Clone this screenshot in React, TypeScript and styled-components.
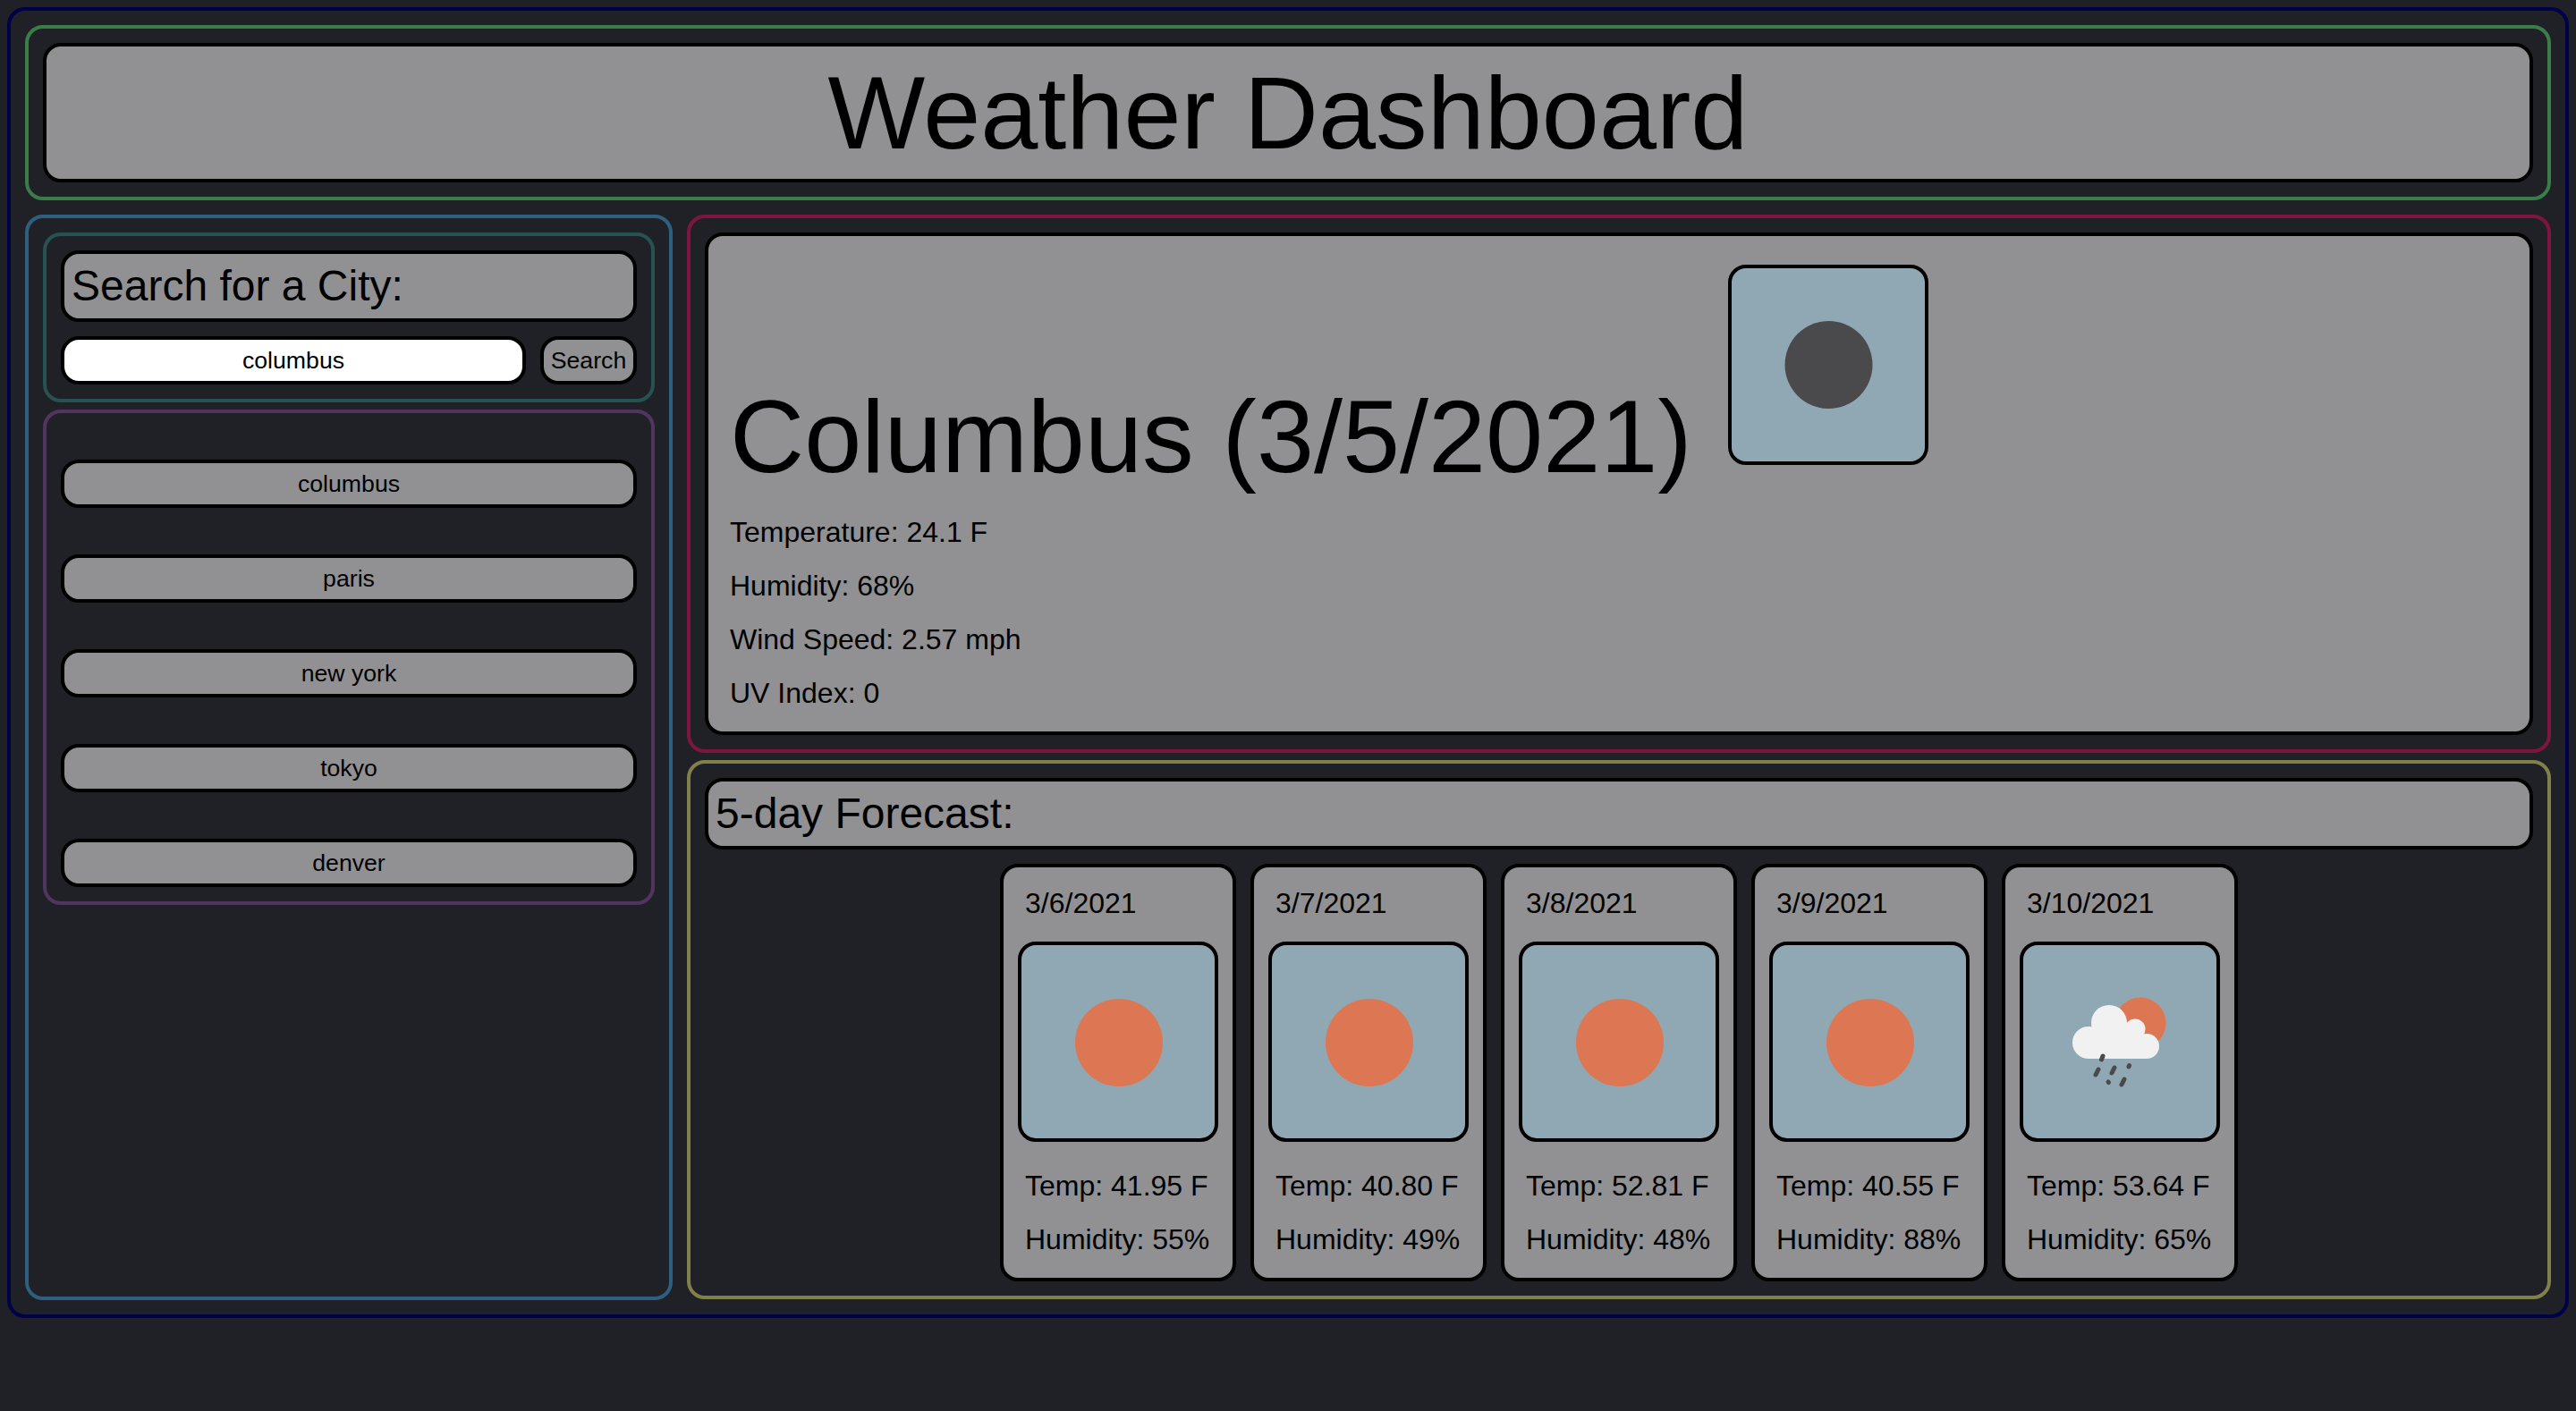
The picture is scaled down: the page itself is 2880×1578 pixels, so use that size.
import React from "react";
import styled, { createGlobalStyle } from "styled-components";

const GlobalStyle = createGlobalStyle`
  html, body { margin: 0; padding: 0; background: #202126; }
  body { margin: 8px; font-family: "Liberation Sans", Arial, sans-serif; color: #000; }
  * { box-sizing: border-box; }
`;

const GRAY = "#919193";
const SKY = "#90a8b4";
const ORANGE = "#dd7753";

const Frame = styled.div<{ $color: string }>`
  border: 4px solid ${(p) => p.$color};
  border-radius: 20px;
  padding: 16px;
`;

const Page = styled(Frame)`
  height: 1466px;
  display: flex;
  flex-direction: column;
  gap: 16px;
`;

const Plate = styled.div`
  background: ${GRAY};
  border: 4px solid #000;
  border-radius: 20px;
`;

const TitleBar = styled(Plate)`
  height: 156px;
  display: flex;
  align-items: center;
  justify-content: center;
`;

const Title = styled.h1`
  margin: 0;
  font-size: 115.2px;
  line-height: 138px;
  font-weight: 400;
`;

const Columns = styled.div`
  flex: 1;
  display: grid;
  grid-template-columns: 724px 1fr;
  gap: 16px;
`;

const Sidebar = styled(Frame)`
  display: flex;
  flex-direction: column;
  align-items: stretch;
  gap: 8px;
`;

const SearchHeading = styled(Plate)`
  margin: 0;
  height: 80px;
  padding: 0 8px;
  font-size: 48px;
  line-height: 72px;
  font-weight: 400;
`;

const SearchRow = styled.div`
  margin-top: 16px;
  display: flex;
  gap: 16px;
`;

const CityInput = styled.input`
  flex: 1;
  min-width: 0;
  height: 54px;
  padding: 0;
  background: #fff;
  border: 4px solid #000;
  border-radius: 20px;
  outline: none;
  text-align: center;
  font-family: inherit;
  font-size: 26.67px;
  color: #000;
`;

const GrayButton = styled.button`
  height: 54px;
  padding: 0;
  background: ${GRAY};
  border: 4px solid #000;
  border-radius: 20px;
  font-family: inherit;
  font-size: 26.67px;
  color: #000;
  text-align: center;
`;

const SearchButton = styled(GrayButton)`
  width: 108px;
`;

const HistoryList = styled(Frame)`
  padding-top: 52px;
  display: flex;
  flex-direction: column;
  gap: 52px;
`;

const RightColumn = styled.div`
  display: flex;
  flex-direction: column;
  gap: 8px;
`;

const CurrentPanel = styled(Plate)`
  height: 562px;
  padding-bottom: 20px;
`;

const CurrentHead = styled.div`
  display: flex;
  align-items: flex-start;
  padding-left: 24px;
`;

const CityTitle = styled.h1`
  margin: 155px 0 16px;
  font-size: 115.2px;
  line-height: 138px;
  font-weight: 400;
`;

const IconBox = styled.div`
  flex: none;
  width: 224px;
  height: 224px;
  background: ${SKY};
  border: 4px solid #000;
  border-radius: 20px;
`;

const CurrentIcon = styled(IconBox)`
  margin: 32px 0 0 40px;
`;

const Drawing = styled.svg`
  display: block;
  width: 216px;
  height: 216px;
`;

const StatList = styled.div`
  padding-left: 24px;
  display: flex;
  flex-direction: column;
  gap: 16px;
`;

const Stat = styled.p`
  margin: 0;
  font-size: 32px;
  line-height: 44px;
`;

const ForecastHeading = styled(Plate)`
  margin: 0;
  height: 80px;
  padding: 0 8px;
  font-size: 48px;
  line-height: 72px;
  font-weight: 400;
`;

const CardRow = styled.div`
  margin-top: 16px;
  display: flex;
  justify-content: center;
  gap: 16px;
`;

const Card = styled(Plate)`
  width: 264px;
  height: 467px;
  padding: 18px 16px 0;
`;

const CardDate = styled(Stat)`
  padding-left: 8px;
  margin-bottom: 21px;
`;

const CardStats = styled(StatList)`
  margin-top: 27px;
  padding-left: 8px;
`;

const Sun = ({ color, cx = 108, cy = 108 }: { color: string; cx?: number; cy?: number }) => (
  <Drawing viewBox="0 0 216 216">
    <circle cx={cx} cy={cy} r="49" fill={color} />
  </Drawing>
);

const RainCloud = () => (
  <Drawing viewBox="0 0 216 216">
    <circle cx="131" cy="87" r="28.5" fill={ORANGE} />
    <g fill="#f1f1f1">
      <circle cx="73" cy="109" r="18" />
      <circle cx="96" cy="87" r="20" />
      <circle cx="125" cy="94" r="11.5" />
      <circle cx="138" cy="113" r="14" />
      <rect x="73" y="100" width="65" height="27" />
      <rect x="96" y="88" width="29" height="14" />
    </g>
    <g stroke="#4a4a4d" strokeWidth="5" strokeLinecap="round">
      <line x1="89" y1="124" x2="87.5" y2="128" />
      <line x1="84" y1="139" x2="81" y2="145" />
      <line x1="102" y1="137" x2="99" y2="143" />
      <line x1="118.5" y1="134.5" x2="118" y2="136" />
      <line x1="95" y1="153" x2="95.5" y2="153.5" />
      <line x1="113" y1="150" x2="110" y2="156" />
    </g>
  </Drawing>
);

const days = [
  { date: "3/6/2021", temp: "41.95", hum: "55" },
  { date: "3/7/2021", temp: "40.80", hum: "49" },
  { date: "3/8/2021", temp: "52.81", hum: "48" },
  { date: "3/9/2021", temp: "40.55", hum: "88" },
  { date: "3/10/2021", temp: "53.64", hum: "65", rain: true },
];

const cities = ["columbus", "paris", "new york", "tokyo", "denver"];

export default function App() {
  return (
    <>
      <GlobalStyle />
      <Page $color="#00004a">
        <Frame $color="#3a7d4a">
          <TitleBar>
            <Title>Weather Dashboard</Title>
          </TitleBar>
        </Frame>
        <Columns>
          <Sidebar $color="#2e5f80">
            <Frame $color="#26524f">
              <SearchHeading as="h2">Search for a City:</SearchHeading>
              <SearchRow>
                <CityInput value="columbus" readOnly />
                <SearchButton>Search</SearchButton>
              </SearchRow>
            </Frame>
            <HistoryList $color="#52355f">
              {cities.map((c) => (
                <GrayButton key={c}>{c}</GrayButton>
              ))}
            </HistoryList>
          </Sidebar>
          <RightColumn>
            <Frame $color="#7d1540">
              <CurrentPanel>
                <CurrentHead>
                  <CityTitle>Columbus (3/5/2021)</CityTitle>
                  <CurrentIcon>
                    <Sun color="#4a4a4c" cx={108.5} />
                  </CurrentIcon>
                </CurrentHead>
                <StatList>
                  <Stat>Temperature: 24.1 F</Stat>
                  <Stat>Humidity: 68%</Stat>
                  <Stat>Wind Speed: 2.57 mph</Stat>
                  <Stat>UV Index: 0</Stat>
                </StatList>
              </CurrentPanel>
            </Frame>
            <Frame $color="#80804a">
              <ForecastHeading as="h2">5-day Forecast:</ForecastHeading>
              <CardRow>
                {days.map((d) => (
                  <Card key={d.date}>
                    <CardDate>{d.date}</CardDate>
                    <IconBox>{d.rain ? <RainCloud /> : <Sun color={ORANGE} cx={109} cy={109} />}</IconBox>
                    <CardStats>
                      <Stat>Temp: {d.temp} F</Stat>
                      <Stat>Humidity: {d.hum}%</Stat>
                    </CardStats>
                  </Card>
                ))}
              </CardRow>
            </Frame>
          </RightColumn>
        </Columns>
      </Page>
    </>
  );
}
